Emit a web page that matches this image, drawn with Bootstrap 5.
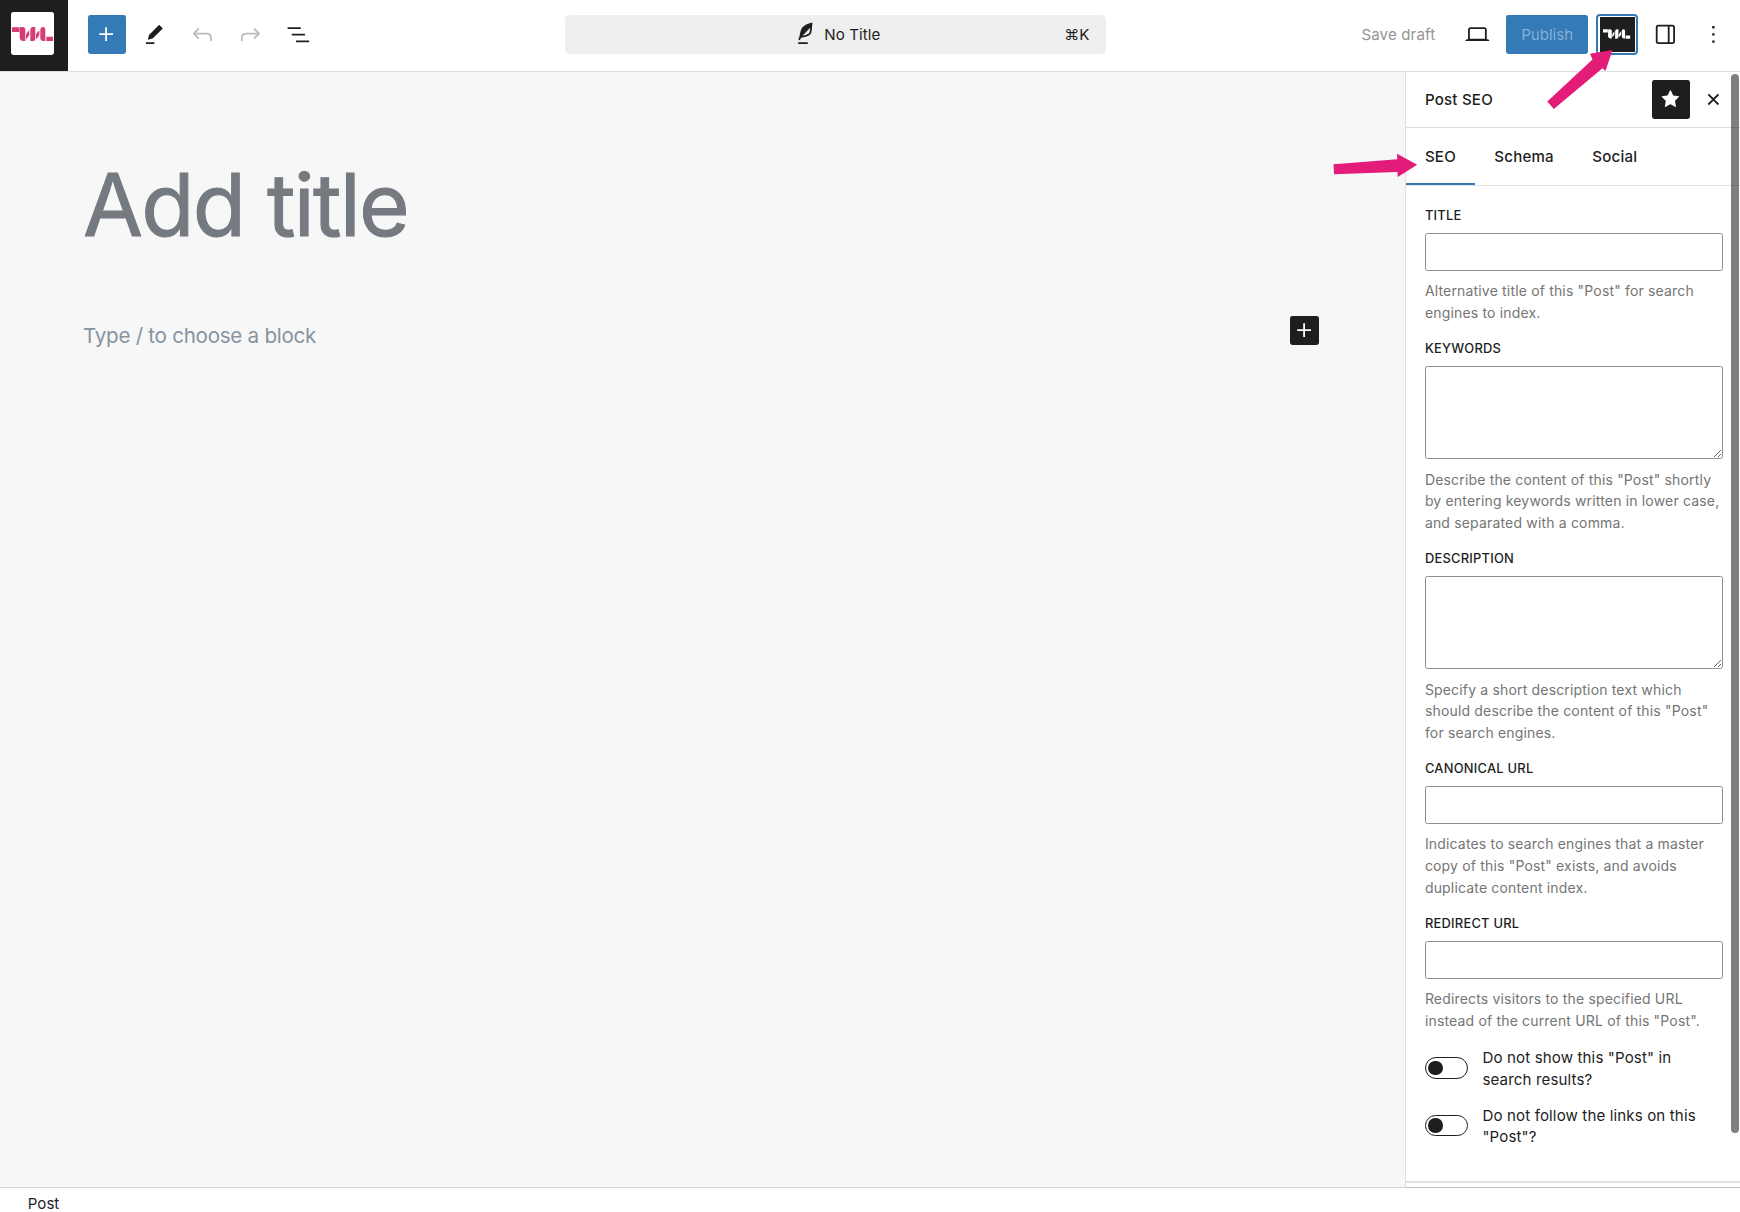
<!DOCTYPE html>
<html lang="en">
<head>
<meta charset="utf-8">
<meta name="viewport" content="width=device-width, initial-scale=1">
<title>Edit Post</title>
<link href="https://cdn.jsdelivr.net/npm/bootstrap@5.3.0/dist/css/bootstrap.min.css" rel="stylesheet">
<style>
  :root { --ink: #1e1e1e; --blue: #337ab7; --rule: #dedede; --pink: #e31c79; }
  html, body { height: 100%; overflow: hidden; }
  body { font-family: Inter, "Liberation Sans", sans-serif; font-size: 15.1px; line-height: 21.6px; color: var(--ink); background: #fff; }
  svg { display: block; flex: none; }
  .ico { width: 28.8px; height: 28.8px; fill: currentColor; }
  .line-ico { fill: none; stroke: currentColor; stroke-width: 1.5; stroke-linecap: round; stroke-linejoin: round; }
  .topbar { height: 71.5px; border-bottom: 1.5px solid var(--rule); }
  .site-hub { width: 68.4px; height: 70.5px; background: var(--ink); padding-left: 10.5px; padding-top: 12.3px; }
  .site-logo { width: 43.4px; height: 43.2px; background: #fff; border-radius: 2.4px; color: #d63c75; }
  .tool-row { gap: 9.6px; padding: 15.2px 0 0 19.3px; }
  .tool { width: 38.4px; height: 38.4px; padding: 0; border: 0; border-radius: 2.4px; display: flex; align-items: center; justify-content: center; color: var(--ink); background: none; }
  .tool-blue { background: var(--blue); color: #fff; }
  .tool-dark { background: var(--ink); color: #fff; }
  .tool-off { color: #bcbcbc; }
  .command-bar { width: 540.5px; height: 38.4px; margin: 15.2px 0 0 247.4px; background: #efefef; border-radius: 4.8px; padding: 1px 16.4px 0 225.5px; }
  .command-bar .ico { margin-top: -1px; }
  .command-name { margin-left: 4.6px; letter-spacing: .07px; }
  .right-tools { padding: 15.2px 7.7px 0 0; }
  .draft-label { color: #949494; letter-spacing: .13px; margin-right: 24.2px; padding-top: 1.5px; }
  .publish { width: 81.8px; height: 38.4px; border-radius: 2.4px; background: var(--blue); color: #85afd4; margin: 0 8.4px 0 14px; display: flex; align-items: center; justify-content: center; border: 0; padding: 1.5px 0 0; }
  .plugin { width: 41.5px; height: 41.5px; border: 2px solid var(--blue); border-radius: 4px; background: #fff; padding: 1.2px; margin: -1.5px 8px 0 0; }
  .plugin-face { background: var(--ink); color: #fff; width: 100%; height: 100%; }
  .canvas { background: #f7f7f7; border-right: 1.5px solid var(--rule); border-bottom: 1px solid #d8d8d8; padding: 0 85.7px 0 83px; }
  .post-title { font-size: 87px; line-height: 104px; font-weight: 400; letter-spacing: -1.75px; color: #757a80; -webkit-text-stroke: 1px #757a80; margin: 81px 0 0; }
  .block-row { margin-top: 58.5px; color: #8693a1; font-size: 20.6px; letter-spacing: -.27px; line-height: 29px; }
  .block-prompt { padding-top: 5.5px; }
  .inserter { width: 29px; height: 29px; background: var(--ink); color: #fff; border-radius: 2.4px; margin-top: 1px; }
  .sidebar { width: 334.3px; border-bottom: 1px solid #bdbdbd; }
  .side-head { height: 56.7px; border-bottom: 1px solid var(--rule); padding: 0 7.7px 0 19.2px; font-weight: 500; letter-spacing: .2px; }
  .side-name { padding-top: 1px; }
  .side-tabs { height: 57.6px; border-bottom: 1px solid #e4e4e4; font-weight: 500; letter-spacing: .2px; }
  .side-tab { padding: 17.6px 19.2px 0; color: var(--ink); border-bottom: 2px solid transparent; }
  .side-tab.current { border-color: var(--blue); }
  .fields { padding: 22px 17.5px 0 19.2px; }
  .field-name { display: block; font-size: 12.9px; line-height: 15px; font-weight: 500; letter-spacing: .24px; margin-bottom: 10px; text-transform: uppercase; }
  .field-box, .field-box:focus { display: block; width: 100%; height: 38.2px; border: 1px solid #8e8e8e; border-radius: 2.4px; background: #fff; padding: 0; outline: 0; }
  textarea.field-box, textarea.field-box:focus { height: 93.4px; resize: vertical; }
  .hint { font-size: 14px; letter-spacing: .17px; color: #757575; margin: 9.4px 0 17.4px; white-space: nowrap; }
  .hint.last-hint { margin-bottom: 15px; }
  .toggle-row { letter-spacing: .12px; margin-bottom: 14.4px; white-space: nowrap; }
  .toggle-text { margin: .8px 0 -.8px; }
  .switch { width: 43.2px; height: 21.8px; border: 1.2px solid var(--ink); border-radius: 11px; margin-right: 14.4px; padding-left: 2.4px; }
  .knob { width: 14.4px; height: 14.4px; border-radius: 50%; background: var(--ink); }
  .panel-end { height: 2px; background: #e0e0e0; margin-bottom: 3.8px; }
  .footer-crumb { height: 24px; padding: 4.8px 0 0 27.8px; }
  .scroll-thumb { position: absolute; left: 1731px; top: 74px; width: 8px; height: 1059px; border-radius: 4px; background: rgba(0,0,0,.5); }
  .pointers { position: absolute; left: 0; top: 0; width: 1740px; height: 240px; pointer-events: none; fill: var(--pink); }
</style>
<script src="https://cdn.jsdelivr.net/npm/bootstrap@5.3.0/dist/js/bootstrap.bundle.min.js"></script>
</head>
<body class="d-flex flex-column">
<svg width="0" height="0" class="position-absolute">
  <symbol id="wave" viewBox="0 0 124 44">
    <path d="M0 1h22v14H0zM23 4q0-4 4-4h5q8 0 8 8v34h-5q-12 0-12-11zM42 25q0-5 10-15v12q0 5-10 15zM55 10q0-10 8-10h7v33q0 10-8 10h-7zM72 25q0-5 10-15v12q0 5-10 15zM85 10q0-10 8-10 7 0 7 8v34h-5q-10 0-10-10zM103 29h21v14h-21z"/>
  </symbol>
  <symbol id="plus" viewBox="0 0 24 24"><path d="M11 12.5V17.5H12.5V12.5H17.5V11H12.5V6H11V11H6V12.5H11Z"/></symbol>
</svg>

<header class="topbar d-flex flex-shrink-0">
  <div class="site-hub flex-shrink-0">
    <div class="site-logo d-flex align-items-center justify-content-center"><svg width="41.3" height="14.7" fill="currentColor"><use href="#wave"/></svg></div>
  </div>
  <div class="tool-row d-flex">
    <button class="tool tool-blue" aria-label="Add block"><svg class="ico"><use href="#plus"/></svg></button>
    <button class="tool" aria-label="Tools"><svg class="ico" viewBox="0 0 24 24"><path d="m19 7-3-3-8.5 8.5-1 4 4-1L19 7Zm-7 11.5H5V20h7v-1.5Z"/></svg></button>
    <button class="tool tool-off" aria-label="Undo"><svg class="ico line-ico" viewBox="0 0 24 24"><path d="M8.6 7.5 4.8 11.3l3.8 3.8M5 11.3h10.4q3.8 0 3.8 3.8v1.9"/></svg></button>
    <button class="tool tool-off" aria-label="Redo"><svg class="ico line-ico" viewBox="0 0 24 24"><path d="m15.4 7.5 3.8 3.8-3.8 3.8M19 11.3H8.6q-3.8 0-3.8 3.8v1.9"/></svg></button>
    <button class="tool" aria-label="Document overview"><svg class="ico" viewBox="0 0 24 24"><path d="M3 6h11v1.5H3V6Zm3.5 5.5h11V13h-11v-1.5ZM21 17H10v1.5h11V17Z"/></svg></button>
  </div>
  <div class="command-bar d-flex align-items-center flex-shrink-0">
    <svg class="ico" viewBox="0 0 24 24"><path d="M17.8 2l-.9.3c-.1 0-3.6 1-5.2 2.1C10 5.5 9.3 6.5 8.9 7.1c-.6.9-1.7 4.7-1.7 6.3l-.9 2.3c-.2.4 0 .8.4 1 .1 0 .2.1.3.1.3 0 .6-.2.7-.5l.6-1.5c.3 0 .7-.1 1.2-.2.7-.1 1.4-.3 2.2-.5.8-.2 1.6-.5 2.4-.8.7-.3 1.4-.7 1.9-1.2s.8-1.2 1-1.9c.2-.7.3-1.6.4-2.4.1-.8.1-1.7.2-2.5 0-.8.1-1.5.2-2.1V2zm-1.9 5.6c-.1.8-.2 1.5-.3 2.1-.2.6-.4 1-.6 1.3-.3.3-.8.6-1.4.9-.7.3-1.4.5-2.2.8-.6.2-1.3.3-1.8.4L15 7.5c.3-.3.6-.7 1-1.1 0 .4 0 .8-.1 1.2zM6 20h8v-1.5H6V20z"/></svg>
    <span class="command-name">No Title</span>
    <span class="ms-auto">⌘K</span>
  </div>
  <div class="right-tools d-flex align-items-start ms-auto">
    <div class="d-flex align-items-center">
      <span class="draft-label">Save draft</span>
      <svg class="ico ms-1" viewBox="0 0 24 24"><path d="M20.5 16h-.7V8c0-1.1-.9-2-2-2H6.2c-1.1 0-2 .9-2 2v8h-.7c-.8 0-1.5.7-1.5 1.5h20c0-.8-.7-1.5-1.5-1.5zM5.7 8c0-.3.2-.5.5-.5h11.6c.3 0 .5.2.5.5v7.6H5.7V8z"/></svg>
      <button class="publish">Publish</button>
    </div>
    <div class="plugin"><div class="plugin-face d-flex align-items-center justify-content-center"><svg width="27.4" height="10" fill="currentColor"><use href="#wave"/></svg></div></div>
    <div class="d-flex" style="gap:9.6px">
      <button class="tool" aria-label="Settings"><svg class="ico" viewBox="0 0 24 24"><path d="M18 4H6c-1.1 0-2 .9-2 2v12c0 1.1.9 2 2 2h12c1.1 0 2-.9 2-2V6c0-1.1-.9-2-2-2zm-4 14.5H6c-.3 0-.5-.2-.5-.5V6c0-.3.2-.5.5-.5h8v13zm4.5-.5c0 .3-.2.5-.5.5h-2.5v-13H18c.3 0 .5.2.5.5v12z"/></svg></button>
      <button class="tool" aria-label="Options"><svg class="ico" viewBox="0 0 24 24"><path d="M13 19h-2v-2h2v2zm0-6h-2v-2h2v2zm0-6h-2V5h2v2z"/></svg></button>
    </div>
  </div>
</header>

<div class="d-flex flex-grow-1">
  <main class="canvas flex-grow-1">
    <h1 class="post-title">Add title</h1>
    <div class="block-row d-flex justify-content-between align-items-start">
      <span class="block-prompt">Type / to choose a block</span>
      <span class="inserter d-flex align-items-center justify-content-center"><svg class="ico"><use href="#plus"/></svg></span>
    </div>
  </main>
  <aside class="sidebar flex-shrink-0 d-flex flex-column">
    <div class="side-head d-flex align-items-center">
      <span class="side-name me-auto">Post SEO</span>
      <button class="tool tool-dark me-1" aria-label="Unpin"><svg class="ico" viewBox="0 0 24 24"><path d="M11.776 4.454a.25.25 0 01.448 0l2.069 4.192a.25.25 0 00.188.137l4.626.672a.25.25 0 01.139.426l-3.348 3.263a.25.25 0 00-.072.222l.79 4.607a.25.25 0 01-.362.263l-4.138-2.175a.25.25 0 00-.232 0l-4.138 2.175a.25.25 0 01-.363-.263l.79-4.607a.25.25 0 00-.071-.222L4.754 9.881a.25.25 0 01.139-.426l4.626-.672a.25.25 0 00.188-.137l2.069-4.192z"/></svg></button>
      <button class="tool" aria-label="Close"><svg class="ico" viewBox="0 0 24 24"><path d="M12 13.06l3.712 3.713 1.061-1.06L13.061 12l3.712-3.712-1.06-1.06L12 10.938 8.288 7.227l-1.061 1.06L10.939 12l-3.712 3.712 1.06 1.061L12 13.061z"/></svg></button>
    </div>
    <nav class="side-tabs d-flex">
      <span class="side-tab current">SEO</span>
      <span class="side-tab">Schema</span>
      <span class="side-tab">Social</span>
    </nav>
    <div class="fields flex-grow-1">
      <label class="field-name">Title</label>
      <input class="field-box">
      <p class="hint">Alternative title of this "Post" for search<br>engines to index.</p>
      <label class="field-name">Keywords</label>
      <textarea class="field-box"></textarea>
      <p class="hint">Describe the content of this "Post" shortly<br>by entering keywords written in lower case,<br>and separated with a comma.</p>
      <label class="field-name">Description</label>
      <textarea class="field-box"></textarea>
      <p class="hint">Specify a short description text which<br>should describe the content of this "Post"<br>for search engines.</p>
      <label class="field-name">Canonical URL</label>
      <input class="field-box">
      <p class="hint">Indicates to search engines that a master<br>copy of this "Post" exists, and avoids<br>duplicate content index.</p>
      <label class="field-name">Redirect URL</label>
      <input class="field-box">
      <p class="hint last-hint">Redirects visitors to the specified URL<br>instead of the current URL of this "Post".</p>
      <div class="toggle-row d-flex align-items-center"><span class="switch d-flex align-items-center flex-shrink-0"><span class="knob"></span></span><span class="toggle-text">Do not show this "Post" in<br>search results?</span></div>
      <div class="toggle-row d-flex align-items-center"><span class="switch d-flex align-items-center flex-shrink-0"><span class="knob"></span></span><span class="toggle-text">Do not follow the links on this<br>"Post"?</span></div>
    </div>
    <div class="panel-end"></div>
  </aside>
</div>
<footer class="footer-crumb flex-shrink-0">Post</footer>

<div class="scroll-thumb"></div>
<svg class="pointers" viewBox="0 0 1740 240">
  <path d="M1547.3 101.5 1592.5 59.5 1590 53.8 1612.5 50 1605.5 71 1602.5 68.3 1553.8 109z"/>
  <path d="M1333.5 164.3 1397.2 159.2 1397 153.8 1417.2 164.7 1397.8 177 1397.4 172 1334 174.3z"/>
</svg>
</body>
</html>
